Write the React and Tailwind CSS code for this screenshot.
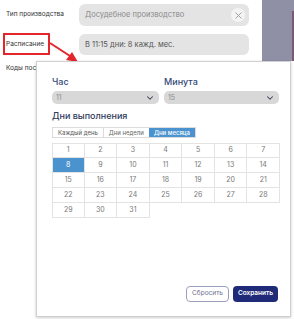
import { ChevronDown, X } from "lucide-react";

const days = Array.from({ length: 31 }, (_, i) => i + 1);

function Select({ value, width }) {
  return (
    <div
      className={`${width} h-[13px] rounded-[5px] bg-[#d8d8d8] flex items-center justify-between pl-[4px] pr-[4px]`}
    >
      <span className="text-[7px] text-[#8c8c8c] leading-none">{value}</span>
      <ChevronDown size={10} strokeWidth={2.5} className="text-[#3a3f55]" />
    </div>
  );
}

export default function App() {
  return (
    <div
      className="relative w-[294px] h-[319px] overflow-hidden bg-white"
      style={{ fontFamily: "Inter, 'Liberation Sans', sans-serif" }}
    >
      <div className="flex">
        {/* FORM */}
        <div className="w-[262px] pt-[4px] pl-[6px] flex flex-col gap-[8px]">
          <div className="flex items-center">
            <div className="w-[73px] text-[6.5px] text-[#333]">Тип производства</div>
            <div className="w-[170px] h-[22px] rounded-[6px] bg-[#e4e4e4] flex items-center justify-between pl-[6px] pr-[4px]">
              <span className="text-[7.5px] text-[#8a8a8a]">Досудебное производство</span>
              <div className="w-[14px] h-[14px] rounded-full bg-[#f4f4f4] flex items-center justify-center">
                <X size={11} strokeWidth={2} className="text-[#9a9a9a]" />
              </div>
            </div>
          </div>
          <div className="flex items-center">
            <div className="w-[73px] text-[6.5px] text-[#333]">Расписание</div>
            <div className="w-[170px] h-[21px] rounded-[6px] bg-[#e4e4e4] flex items-center pl-[6px]">
              <span className="text-[7.5px] text-[#555]">В 11:15 дни: 8 кажд. мес.</span>
            </div>
          </div>
          <div className="text-[6.5px] text-[#333] mt-[1px]">Коды постановлений</div>
        </div>
        {/* SIDE */}
        <div className="w-[32px] h-[61px] bg-[#8f90a6] flex justify-end">
          <div className="w-[2px] h-[50px] mt-[11px] bg-[#7a5c72]" />
        </div>
      </div>

      {/* ANNOTATION */}
      <div className="absolute left-[3px] top-[33px] w-[47px] h-[22px] border-2 border-[#e3262b]" />
      <svg className="absolute left-0 top-0" width="294" height="319">
        <line x1="50" y1="43" x2="70" y2="56" stroke="#e3262b" strokeWidth="2" />
        <polygon points="78,62 66,60 72,52" fill="#e3262b" />
      </svg>

      {/* POPUP */}
      <div className="absolute left-[36px] top-[61px] w-[255px] h-[256px] bg-white border border-[#cfcfd4] shadow-[0_1px_3px_rgba(0,0,0,0.2)] flex flex-col pl-[15px] pt-[14px] pb-[14px]">
        <div className="flex gap-[5px]">
          <div className="flex flex-col gap-[3px]">
            <div className="text-[9px] leading-[12px] font-medium text-[#34497a]">Час</div>
            <Select value="11" width="w-[107px]" />
          </div>
          <div className="flex flex-col gap-[3px]">
            <div className="text-[9px] leading-[12px] font-medium text-[#34497a]">Минута</div>
            <Select value="15" width="w-[115px]" />
          </div>
        </div>

        <div className="mt-[6px] text-[9px] leading-[12px] font-medium text-[#2e3a5c]">Дни выполнения</div>

        <div className="mt-[5px] flex h-[11px] w-fit border border-[#dcdcdc] text-[6px] leading-none">
          <div className="px-[5px] flex items-center text-[#555] border-r border-[#dcdcdc]">Каждый день</div>
          <div className="px-[5px] flex items-center text-[#666]">Дни недели</div>
          <div className="px-[5px] flex items-center bg-[#4a93cf] text-white font-medium">Дни месяца</div>
        </div>

        <div className="mt-[5px] grid grid-cols-7 w-[228px]">
          {days.map((d) => (
            <div
              key={d}
              className={`h-[15px] flex items-center justify-center text-[7px] border-r border-b border-[#e3e3e3] ${
                d % 7 === 1 ? "border-l" : ""
              } ${d <= 7 ? "border-t" : ""} ${
                d === 8 ? "bg-[#4a93cf] text-white" : "text-[#777]"
              }`}
            >
              {d}
            </div>
          ))}
        </div>

        <div className="mt-auto flex justify-end gap-[4px] pr-[12px]">
          <button className="w-[43px] h-[16px] rounded-[4px] border border-[#9aa0bc] bg-white text-[6.5px] text-[#6b7090]">
            Сбросить
          </button>
          <button className="w-[45px] h-[16px] rounded-[4px] bg-[#1f2a78] text-[6.5px] font-semibold text-white">
            Сохранить
          </button>
        </div>
      </div>
    </div>
  );
}
